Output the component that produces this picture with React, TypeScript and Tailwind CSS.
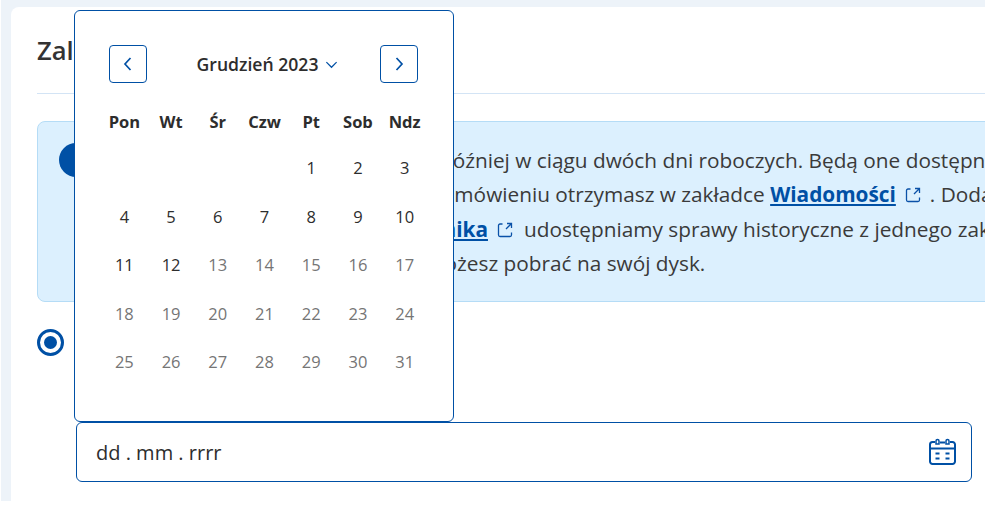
const font = "font-['Open_Sans','Noto_Sans',sans-serif]";

function Ext() {
  return (
    <svg viewBox="0 0 16 16" className="inline-block w-[16px] h-[16px] mx-[9px] align-[-1px]" fill="none" stroke="#0a51a8" strokeWidth="1.3">
      <path d="M5.5 2H3a1.5 1.5 0 0 0-1.5 1.5V13A1.5 1.5 0 0 0 3 14.5h10a1.5 1.5 0 0 0 1.5-1.5v-2.5" />
      <path d="M10 1.5h4.5V6M14.5 1.5 9 7" />
    </svg>
  );
}

function Link({ children }: { children: React.ReactNode }) {
  return <a className="font-bold text-[#0050a5] underline">{children}</a>;
}

const weeks: (number | null)[][] = [
  [null, null, null, null, 1, 2, 3],
  [4, 5, 6, 7, 8, 9, 10],
  [11, 12, 13, 14, 15, 16, 17],
  [18, 19, 20, 21, 22, 23, 24],
  [25, 26, 27, 28, 29, 30, 31],
];
const days = ["Pon", "Wt", "Śr", "Czw", "Pt", "Sob", "Ndz"];

function Calendar() {
  return (
    <div className="absolute left-[74px] top-[10px] w-[380px] h-[412px] z-10 bg-white border border-[#0050a5] rounded-[6px] px-[26px] pt-[34px]">
      <div className="flex items-center justify-between pl-[8px] pr-[8px] w-[325px] h-[38px]">
        <button className="w-[38px] h-[38px] border border-[#0050a5] rounded-[4px] flex items-center justify-center">
          <svg viewBox="0 0 16 16" className="w-[16px] h-[16px]" fill="none" stroke="#0050a5" strokeWidth="1.7"><path d="M10.5 2 5 8l5.500 6" /></svg>
        </button>
        <div className="flex items-center gap-[7px] pl-[8px] pt-[1px] text-[17.6px] font-semibold text-[#2d2d2d]">
          Grudzień 2023
          <svg viewBox="0 0 14 14" className="w-[13px] h-[13px]" fill="none" stroke="#0050a5" strokeWidth="1.3"><path d="M1.5 4.500 7 10l5.500-5.500" /></svg>
        </div>
        <button className="w-[38px] h-[38px] border border-[#0050a5] rounded-[4px] flex items-center justify-center">
          <svg viewBox="0 0 16 16" className="w-[16px] h-[16px]" fill="none" stroke="#0050a5" strokeWidth="1.7"><path d="M5.500 2 11 8l-5.500 6" /></svg>
        </button>
      </div>
      <div className="grid grid-cols-7 w-[327px] mt-[27px] text-[16.5px] font-bold text-[#2d2d2d] text-center leading-[24px]">
        {days.map((d) => (
          <div key={d}>{d}</div>
        ))}
      </div>
      <div className="grid grid-cols-7 w-[327px] mt-[10px] text-[16.5px] text-center">
        {weeks.flat().map((d, i) => (
          <div key={i} className={`h-[48.5px] leading-[48px] ${d !== null && d > 12 ? "text-[#757575]" : "text-[#2d2d2d]"}`}>
            {d}
          </div>
        ))}
      </div>
    </div>
  );
}

export default function App() {
  return (
    <div className={`${font} relative w-full h-[506px] bg-white overflow-hidden`}>
      <div className="w-[984px] h-[501px] ml-[1px] bg-[#edf3f9] pl-[10px] pt-[7px] overflow-hidden">
        <div className="h-[494px] bg-white rounded-tl-[8px] pl-[26px] overflow-hidden">
          <div className="pt-[26px] h-[87px] border-b border-[#d3e4f5] w-[2000px]">
            <h1 className="text-[25.6px] leading-[36px] font-semibold text-[#333333]">Zaległości</h1>
          </div>
          <div className="mt-[27px] w-[1200px] h-[181px] bg-[#dcf0fe] border border-[#b5dcf6] rounded-[8px] pl-[21px] pt-[21px] flex gap-[14px] text-[20.8px] leading-[34.4px] text-[#3a3a3a]">
            <div className="w-[34px] h-[34px] rounded-full bg-[#0050a5] shrink-0" />
            <div className="whitespace-nowrap">
              <p className="pl-[15px]">Twoje akta sprawy otrzymasz najpóźniej w ciągu dwóch dni roboczych. Będą one dostępne</p>
              <p className="-ml-[22px]">Informację o złożonym przez Ciebie zamówieniu otrzymasz w zakładce <Link>Wiadomości</Link><Ext />. Dodatkowo</p>
              <p className="-ml-[21px]">Dodatkowo w zakładce <Link>Portal Podatnika</Link><Ext /><span className="ml-[2px]">udostępniamy sprawy historyczne z jednego zakresu</span></p>
              <p className="pl-[32px]">Po otrzymaniu dokumenty te możesz pobrać na swój dysk.</p>
            </div>
          </div>
          <div className="flex items-center mt-[26px] h-[28px]">
            <div className="w-[27px] h-[27px] rounded-full border-[3px] border-[#0050a5] flex items-center justify-center">
              <div className="w-[13px] h-[13px] rounded-full bg-[#0050a5]" />
            </div>
          </div>
          <div className="mt-[66px] ml-[39px] w-[896px] h-[60px] border border-[#0050a5] rounded-[6px] flex items-center justify-between pl-[19px] pr-[15px] text-[20px] text-[#2d2d2d]">
            <span className="pt-[1px]">dd . mm . rrrr</span>
            <svg viewBox="0 0 27 27" className="w-[27px] h-[27px] mb-[1px]" fill="none" stroke="#0050a5" strokeWidth="2">
              <path d="M6 4H3.500A2.500 2.500 0 0 0 1 6.500V23.500A2.500 2.500 0 0 0 3.500 26h20a2.500 2.500 0 0 0 2.500-2.500V6.500A2.500 2.500 0 0 0 23.500 4H21" />
              <path d="M1 10.500h25M11 4.500h5" />
              <path d="M8.500 1.500a1.500 1.500 0 0 1 1.500 1.500v3h-3V3a1.500 1.500 0 0 1 1.500-1.500zM18.500 1.500a1.500 1.500 0 0 1 1.500 1.500v3h-3V3a1.500 1.500 0 0 1 1.500-1.500z" strokeWidth="1.500" />
              <path d="M6.500 15.500h4M16.500 15.500h4M6.500 20.500h4M16.500 20.500h4" />
            </svg>
          </div>
        </div>
      </div>
      <Calendar />
    </div>
  );
}
